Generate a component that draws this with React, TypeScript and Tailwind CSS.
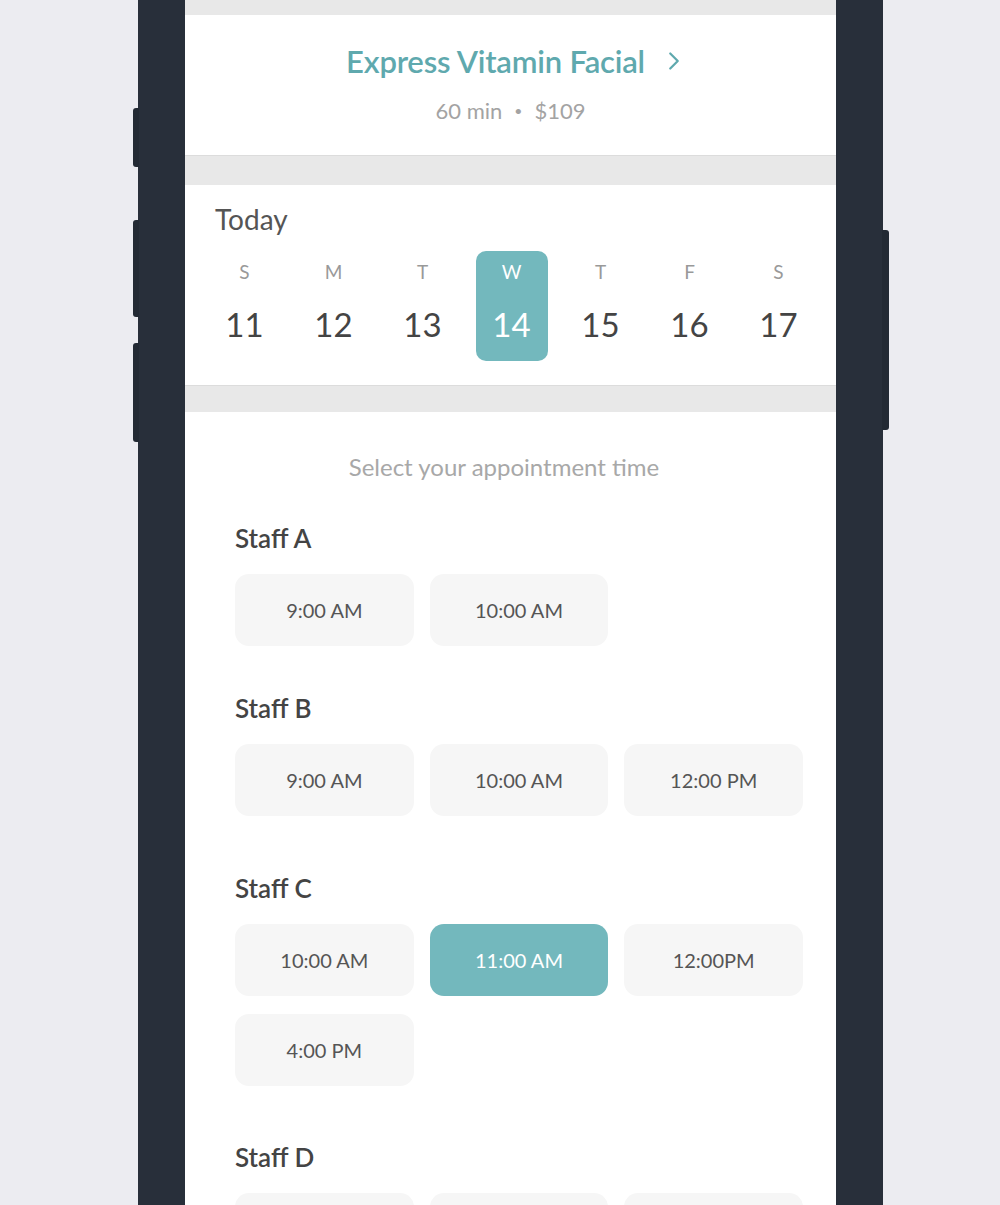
import { ChevronRight } from 'lucide-react';

const days = [
  { d: 'S', n: 11 },
  { d: 'M', n: 12 },
  { d: 'T', n: 13 },
  { d: 'W', n: 14, active: true },
  { d: 'T', n: 15 },
  { d: 'F', n: 16 },
  { d: 'S', n: 17 },
];

const staff = [
  { name: 'Staff A', slots: ['9:00 AM', '10:00 AM'], top: 'mt-[38px]' },
  { name: 'Staff B', slots: ['9:00 AM', '10:00 AM', '12:00 PM'], top: 'mt-[45px]' },
  { name: 'Staff C', slots: ['10:00 AM', '11:00 AM', '12:00PM', '4:00 PM'], active: '11:00 AM', top: 'mt-[55px]' },
  { name: 'Staff D', slots: ['9:00 AM', '10:00 AM', '12:00 PM'], top: 'mt-[54px]' },
];

function Band({ h }: { h: string }) {
  return <div className={`${h} bg-[#e8e8e8] border-t border-[#dcdcdc]`} />;
}

export default function App() {
  return (
    <div className="w-[1000px] h-[1205px] overflow-hidden bg-[#ececf1] font-['Lato',sans-serif]">
      <div className="relative ml-[138px] w-[745px] h-[1205px] bg-[#282f3a] px-[47px]">
        {/* side buttons */}
        <div className="absolute left-[-5px] top-[108px] h-[59px] w-[6px] rounded-l-[3px] bg-[#232a34]" />
        <div className="absolute left-[-5px] top-[220px] h-[97px] w-[6px] rounded-l-[3px] bg-[#232a34]" />
        <div className="absolute left-[-5px] top-[343px] h-[99px] w-[6px] rounded-l-[3px] bg-[#232a34]" />
        <div className="absolute right-[-6px] top-[230px] h-[200px] w-[7px] rounded-r-[3px] bg-[#232a34]" />

        <div className="h-full bg-white overflow-hidden">
          <div className="h-[15px] bg-[#e8e8e8]" />
          <div className="h-[140px] flex flex-col items-center pt-[27px]">
            <div className="flex items-center gap-[14px] text-[#5fa9ae] pl-[14px]">
              <span className="text-[31px] leading-[38px] font-semibold tracking-[-0.2px]">Express Vitamin Facial</span>
              <ChevronRight size={30} strokeWidth={1.8} />
            </div>
            <div className="mt-[17px] text-[22px] leading-[28px] text-[#a3a3a3] flex items-center gap-[12px]">
              <span>60 min</span>
              <span className="text-[14px]">•</span>
              <span>$109</span>
            </div>
          </div>
          <Band h="h-[30px]" />
          <div className="h-[200px] pt-[16px]">
            <div className="pl-[30px] text-[28px] leading-[36px] text-[#555]">Today</div>
            <div className="mt-[14px] grid grid-cols-7 pl-[15px] pr-[13px]">
              {days.map((day) => (
                <div key={day.n} className="flex justify-center">
                  <div
                    className={`w-[72px] h-[110px] rounded-[10px] flex flex-col items-center pt-[8px] ${
                      day.active ? 'bg-[#73b8bd] text-white' : ''
                    }`}
                  >
                    <span className={`text-[19px] leading-[26px] ${day.active ? 'text-white' : 'text-[#999]'}`}>{day.d}</span>
                    <span className={`mt-[19px] text-[33px] leading-[40px] ${day.active ? 'text-white' : 'text-[#444]'}`}>{day.n}</span>
                  </div>
                </div>
              ))}
            </div>
          </div>
          <Band h="h-[27px]" />
          <div className="pt-[39px] pl-[50px] pr-[33px]">
            <div className="text-center text-[24px] leading-[32px] text-[#a8a8a8] pr-[30px]">Select your appointment time</div>
            {staff.map((s) => (
              <div key={s.name} className={s.top}>
                <div className="text-[26px] leading-[34px] font-semibold text-[#444]">{s.name}</div>
                <div className="mt-[19px] grid grid-cols-3 gap-x-[16px] gap-y-[18px]">
                  {s.slots.map((t) => (
                    <div
                      key={t}
                      className={`h-[72px] rounded-[14px] flex items-center justify-center text-[20px] ${
                        s.active === t ? 'bg-[#73b8bd] text-white' : 'bg-[#f6f6f6] text-[#555]'
                      }`}
                    >
                      {t}
                    </div>
                  ))}
                </div>
              </div>
            ))}
          </div>
        </div>
      </div>
    </div>
  );
}
